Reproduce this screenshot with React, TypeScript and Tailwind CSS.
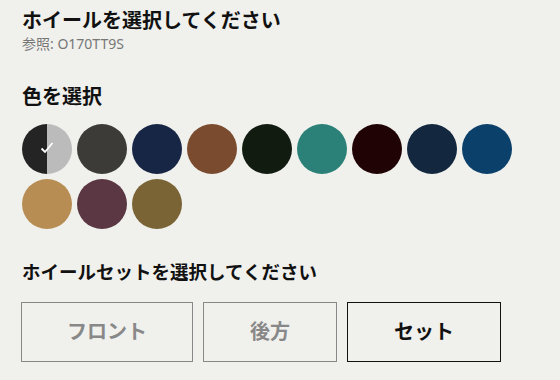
import React from "react";

const colors = [
  "#3c3b37",
  "#172644",
  "#7a4b2e",
  "#111b10",
  "#2b8178",
  "#200405",
  "#13283f",
  "#0b406b",
  "#b88d53",
  "#5a3742",
  "#7a6335",
];

export default function App() {
  return (
    <div
      className="w-[560px] h-[380px] bg-[#f0f0ec] px-[22px] pt-[8px] overflow-hidden"
      style={{ fontFamily: '"Noto Sans", "Noto Sans CJK JP", sans-serif' }}
    >
      <h1 className="text-[20px] font-bold leading-[26px] text-[#111]">ホイールを選択してください</h1>
      <div className="text-[14px] leading-[18px] text-[#777] mt-[1px]">参照: O170TT9S</div>

      <h2 className="text-[20px] font-bold leading-[26px] text-[#111] mt-[31px]">色を選択</h2>
      <div className="flex flex-wrap gap-[5px] w-[500px] mt-[14px]">
        <div className="relative w-[50px] h-[50px] rounded-full overflow-hidden flex">
          <div className="w-1/2 h-full bg-[#242424]" />
          <div className="w-1/2 h-full bg-[#bbbbbb]" />
          <svg
            className="absolute left-[18px] top-[17px]"
            width="14"
            height="14"
            viewBox="0 0 14 14"
            fill="none"
            stroke="white"
            strokeWidth="1.8"
          >
            <path d="M1.5 7.5 L5 11 L12.5 2" />
          </svg>
        </div>
        {colors.map((c) => (
          <div key={c} className="w-[50px] h-[50px] rounded-full" style={{ backgroundColor: c }} />
        ))}
      </div>

      <h2 className="text-[18.5px] font-bold leading-[26px] text-[#111] mt-[30px]">ホイールセットを選択してください</h2>
      <div className="flex gap-[10px] mt-[17px] -ml-[1px]">
        <button className="w-[172px] h-[60px] border border-[#888] text-[#888] text-[20px] font-bold">フロント</button>
        <button className="w-[134px] h-[60px] border border-[#888] text-[#888] text-[20px] font-bold">後方</button>
        <button className="w-[154px] h-[60px] border border-[#111] text-[#111] text-[20px] font-bold">セット</button>
      </div>
    </div>
  );
}
